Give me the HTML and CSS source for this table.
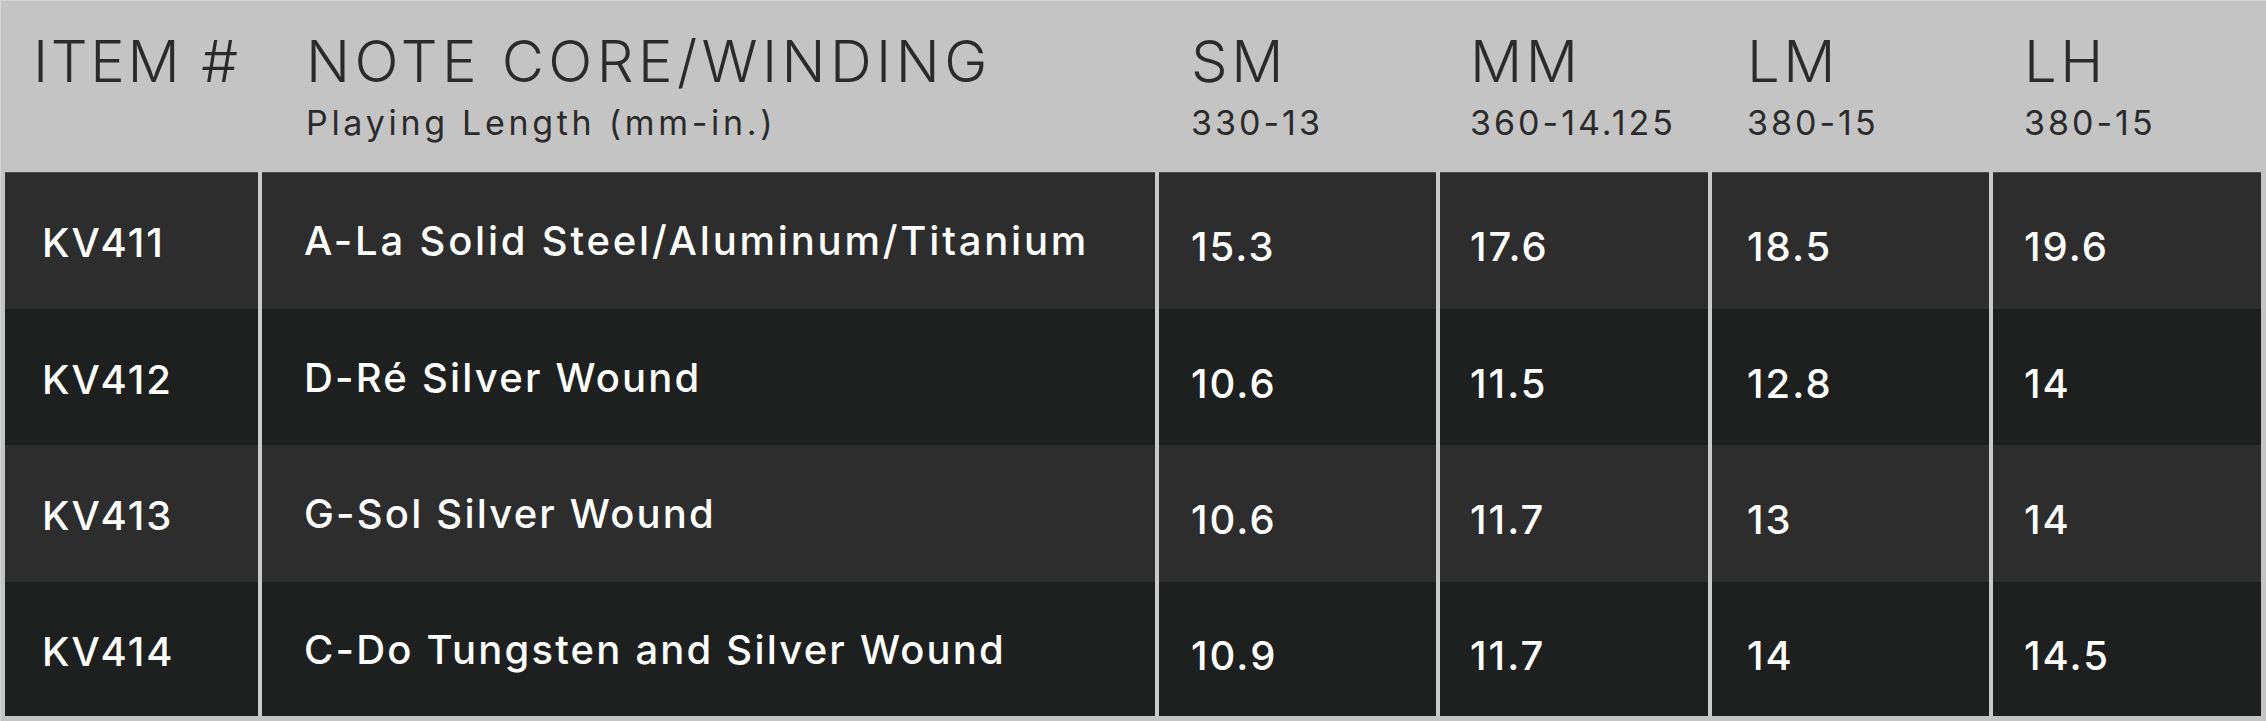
FILE: index.html
```html
<!DOCTYPE html>
<html>
<head>
<meta charset="utf-8">
<link rel="stylesheet" href="styles.css">
</head>
<body>
<div class="table">
  <div class="head">
    <div class="hc h1"><div class="title">ITEM #</div></div>
    <div class="hc h2"><div class="title">NOTE CORE/WINDING</div><div class="sub">Playing Length (mm-in.)</div></div>
    <div class="hc h3"><div class="title">SM</div><div class="sub">330-13</div></div>
    <div class="hc h4"><div class="title">MM</div><div class="sub">360-14.125</div></div>
    <div class="hc h5"><div class="title">LM</div><div class="sub">380-15</div></div>
    <div class="hc h6"><div class="title">LH</div><div class="sub">380-15</div></div>
  </div>
  <div class="body">
    <div class="cell odd c1 first">KV411</div>
    <div class="cell odd c2 first wide">A-La Solid Steel/Aluminum/Titanium</div>
    <div class="cell odd c3 first num">15.3</div>
    <div class="cell odd c4 first num">17.6</div>
    <div class="cell odd c5 first num">18.5</div>
    <div class="cell odd c6 first num">19.6</div>

    <div class="cell even c1">KV412</div>
    <div class="cell even c2">D-Ré Silver Wound</div>
    <div class="cell even c3 num">10.6</div>
    <div class="cell even c4 num">11.5</div>
    <div class="cell even c5 num">12.8</div>
    <div class="cell even c6 num">14</div>

    <div class="cell odd c1">KV413</div>
    <div class="cell odd c2">G-Sol Silver Wound</div>
    <div class="cell odd c3 num">10.6</div>
    <div class="cell odd c4 num">11.7</div>
    <div class="cell odd c5 num">13</div>
    <div class="cell odd c6 num">14</div>

    <div class="cell even c1 last">KV414</div>
    <div class="cell even c2 last">C-Do Tungsten and Silver Wound</div>
    <div class="cell even c3 last num">10.9</div>
    <div class="cell even c4 last num">11.7</div>
    <div class="cell even c5 last num">14</div>
    <div class="cell even c6 last num">14.5</div>
  </div>
</div>
</body>
</html>
```
FILE: styles.css
```css
* { box-sizing: border-box; }
html, body { margin: 0; padding: 0; }
body {
  width: 2266px;
  height: 721px;
  background: #c4c4c4;
  font-family: Inter, "Noto Sans", sans-serif;
  overflow: hidden;
}
.table {
  width: 2266px;
  height: 721px;
  background: #c4c4c4;
  border-top: 1px solid #d6d6d6;
  border-left: 1px solid #d6d6d6;
  padding: 0 5px 5px 4px;
  display: flex;
  flex-direction: column;
}
.head, .body {
  display: grid;
  grid-template-columns: 253px 893px 277px 268px 277px 268px;
  column-gap: 4px;
}
.head {
  height: 171px;
  color: #2b2b2b;
}
.body {
  background: #cacaca;
  grid-template-rows: 137px 136px 137px 134px;
}
.hc {
  padding-top: 30px;
}
.title {
  font-size: 58px;
  font-weight: 300;
  letter-spacing: 4.4px;
  line-height: 60px;
  white-space: nowrap;
}
.sub {
  font-size: 34px;
  font-weight: 400;
  letter-spacing: 3.7px;
  line-height: 40px;
  margin-top: 12px;
  white-space: nowrap;
}
.h3 .sub, .h4 .sub, .h5 .sub, .h6 .sub { letter-spacing: 3px; }
.h1 { padding-left: 28px; }
.h2 { padding-left: 44px; }
.h3 { padding-left: 32px; }
.h4 { padding-left: 30px; }
.h5 { padding-left: 35px; }
.h6 { padding-left: 31px; }
.h1 .title { letter-spacing: 2.6px; }
.h3 .title, .h4 .title, .h5 .title, .h6 .title { letter-spacing: 3.5px; }

.cell {
  display: flex;
  align-items: center;
  color: #ffffff;
  font-size: 40px;
  font-weight: 500;
  letter-spacing: 1.5px;
  white-space: nowrap;
}
.odd { background: #2d2d2d; }
.even { background: #1e1f1f; }
.first { box-shadow: inset 0 1px 0 #4a4a4a; }
.c1 { padding-left: 37px; padding-top: 4px; letter-spacing: 2px; }
.c2 { padding-left: 42px; letter-spacing: 2.2px; }
.c2.wide { letter-spacing: 2.8px; }
.c3 { padding-left: 32px; }
.c4 { padding-left: 30px; }
.c5 { padding-left: 35px; }
.c6 { padding-left: 31px; }
.num { padding-top: 12px; letter-spacing: 2px; }
```
